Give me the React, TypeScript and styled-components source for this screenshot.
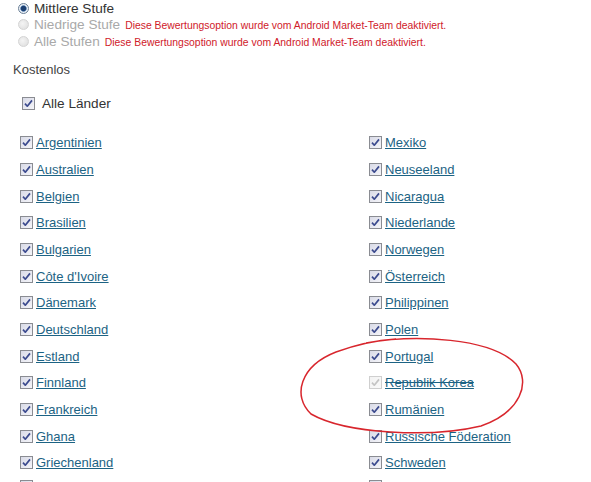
import React from "react";
import styled, { createGlobalStyle } from "styled-components";

const Global = createGlobalStyle`
  html, body { margin: 0; padding: 0; background: #fff; }
  body { font-family: "Liberation Sans", Arial, sans-serif; overflow: hidden; }
`;

const Page = styled.div`
  position: relative;
  width: 591px;
  height: 482px;
  overflow: hidden;
`;

const RadioGroup = styled.div`
  display: flex;
  flex-direction: column;
  padding: 0 0 0 18px;
`;

const RadioRow = styled.div`
  display: flex;
  align-items: center;
  height: 16.5px;
`;

const RadioDot = styled.span<{ $checked?: boolean; $disabled?: boolean }>`
  box-sizing: border-box;
  width: 11px;
  height: 11px;
  border-radius: 50%;
  margin-right: 5px;
  flex: none;
  border: 1px solid ${(p) => (p.$disabled ? "#d4d4d4" : "#6a7f96")};
  background: ${(p) =>
    p.$checked
      ? "radial-gradient(circle at 50% 50%, #1c3f70 0 2.2px, #4f79ad 2.8px, #e8eef4 3.6px, #f4f6f8 100%)"
      : "radial-gradient(circle at 40% 40%, #f4f4f4 0, #dcdcdc 100%)"};
`;

const RadioLabel = styled.span<{ $disabled?: boolean }>`
  font-size: 13.6px;
  color: ${(p) => (p.$disabled ? "#a9a9a9" : "#333")};
`;

const Notice = styled.span`
  font-size: 10.4px;
  color: #d0202a;
  margin-left: 5px;
  padding-top: 2px;
`;

const Section = styled.div`
  padding: 11px 0 0 13px;
`;

const SectionTitle = styled.div`
  font-size: 13px;
  color: #444;
  height: 18px;
  line-height: 18px;
`;

const AllRow = styled.div`
  display: flex;
  align-items: center;
  margin: 16px 0 0 9px;
  height: 17px;
`;

const AllLabel = styled.span`
  font-size: 13.6px;
  color: #333;
  margin-left: 7px;
`;

const Grid = styled.div`
  display: grid;
  grid-template-columns: 349px 1fr;
  grid-auto-flow: column;
  grid-template-rows: repeat(14, 26.67px);
  margin: 18px 0 0 20px;
`;

const Item = styled.div<{ $partial?: boolean }>`
  display: flex;
  align-items: ${(p) => (p.$partial ? "flex-start" : "center")};
  padding-top: ${(p) => (p.$partial ? "4px" : "0")};
`;

const CountryLink = styled.a<{ $disabled?: boolean }>`
  font-size: 13px;
  color: #1c6384;
  text-decoration: ${(p) => (p.$disabled ? "underline line-through" : "underline")};
  margin-left: 3px;
  cursor: pointer;
`;

const BoxWrap = styled.span`
  display: inline-flex;
  flex: none;
  width: 13px;
  height: 13px;
`;

const Check: React.FC<{ disabled?: boolean }> = ({ disabled }) => (
  <BoxWrap>
    <svg width="13" height="13" viewBox="0 0 13 13">
      <defs>
        <linearGradient id={disabled ? "gd" : "ge"} x1="0" y1="0" x2="1" y2="1">
          <stop offset="0" stopColor={disabled ? "#f2f2f2" : "#d7d9e6"} />
          <stop offset="1" stopColor={disabled ? "#fafafa" : "#f6f6fa"} />
        </linearGradient>
      </defs>
      <rect
        x="0.5"
        y="0.5"
        width="12"
        height="12"
        fill={`url(#${disabled ? "gd" : "ge"})`}
        stroke={disabled ? "#cfcfcf" : "#8a8c92"}
      />
      <path
        d="M3 6.6 L5.3 9.2 L10 3.4"
        fill="none"
        stroke={disabled ? "#c4c4c4" : "#3b4a8e"}
        strokeWidth="1.7"
        strokeLinejoin="round"
      />
    </svg>
  </BoxWrap>
);

const Ellipse = styled.svg`
  position: absolute;
  left: 296px;
  top: 334px;
  pointer-events: none;
`;

const left = [
  "Argentinien",
  "Australien",
  "Belgien",
  "Brasilien",
  "Bulgarien",
  "Côte d'Ivoire",
  "Dänemark",
  "Deutschland",
  "Estland",
  "Finnland",
  "Frankreich",
  "Ghana",
  "Griechenland",
  "",
];

const right = [
  "Mexiko",
  "Neuseeland",
  "Nicaragua",
  "Niederlande",
  "Norwegen",
  "Österreich",
  "Philippinen",
  "Polen",
  "Portugal",
  "Republik Korea",
  "Rumänien",
  "Russische Föderation",
  "Schweden",
  "",
];

const notice = "Diese Bewertungsoption wurde vom Android Market-Team deaktiviert.";

export default function App() {
  return (
    <Page>
      <Global />
      <RadioGroup>
        <RadioRow>
          <RadioDot $checked />
          <RadioLabel>Mittlere Stufe</RadioLabel>
        </RadioRow>
        <RadioRow>
          <RadioDot $disabled />
          <RadioLabel $disabled>Niedrige Stufe</RadioLabel>
          <Notice>{notice}</Notice>
        </RadioRow>
        <RadioRow>
          <RadioDot $disabled />
          <RadioLabel $disabled>Alle Stufen</RadioLabel>
          <Notice>{notice}</Notice>
        </RadioRow>
      </RadioGroup>
      <Section>
        <SectionTitle>Kostenlos</SectionTitle>
        <AllRow>
          <Check />
          <AllLabel>Alle Länder</AllLabel>
        </AllRow>
      </Section>
      <Grid>
        {[...left, ...right].map((name, i) => {
          const disabled = name === "Republik Korea";
          const partial = name === "";
          return (
            <Item key={name || `partial-${i}`} $partial={partial}>
              <Check disabled={disabled} />
              {!partial && <CountryLink $disabled={disabled}>{name}</CountryLink>}
            </Item>
          );
        })}
      </Grid>
      <Ellipse width="230" height="104" viewBox="0 0 230 104">
        <path
          d="M70 9 C 120 0, 195 4, 220 30 C 235 48, 225 78, 185 92 C 135 104, 50 100, 15 80 C -4 62, 4 32, 40 18 C 62 10, 85 6, 100 5"
          fill="none"
          stroke="#d8262d"
          strokeWidth="1.5"
        />
      </Ellipse>
    </Page>
  );
}
